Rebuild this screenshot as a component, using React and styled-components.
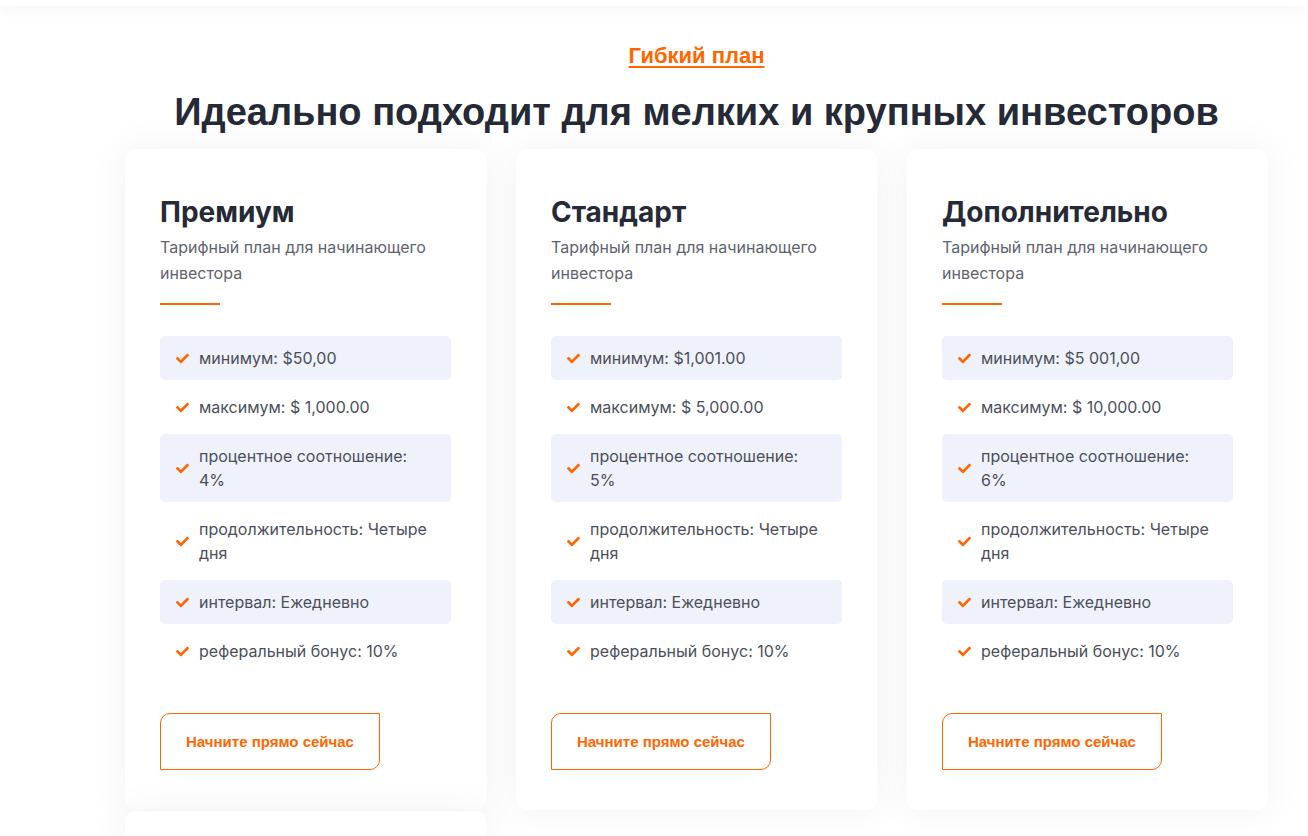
import React from "react";
import styled, { createGlobalStyle } from "styled-components";
import { FaCheck } from "react-icons/fa";

const Global = createGlobalStyle`
  * { box-sizing: border-box; }
  html, body { margin: 0; padding: 0; background: #fff; }
  body { font-family: "Inter", "Liberation Sans", sans-serif; overflow: hidden; height: 836px; }
`;

const Header = styled.header`
  height: 6px;
  background: #fff;
  box-shadow: 0 3px 14px rgba(0, 0, 0, 0.07);
  position: relative;
  z-index: 2;
`;

const Section = styled.section`
  padding: 36px 0 0 125px;
`;

const Container = styled.div`
  width: 1143px;
  display: flex;
  flex-direction: column;
  align-items: center;
`;

const Kicker = styled.a`
  font-family: "Liberation Sans", Arial, sans-serif;
  font-weight: 700;
  font-size: 22px;
  line-height: 28px;
  color: #ff6600;
  text-decoration: underline;
  text-decoration-thickness: 2px;
  text-underline-offset: 3px;
`;

const Heading = styled.h2`
  margin: 20px 0 15px;
  font-family: "Liberation Sans", Arial, sans-serif;
  font-weight: 700;
  font-size: 38px;
  line-height: 44px;
  color: #262a36;
`;

const Grid = styled.div`
  width: 100%;
  display: grid;
  grid-template-columns: repeat(3, 361px);
  column-gap: 30px;
  row-gap: 1px;
`;

const Card = styled.div`
  background: #fff;
  border-radius: 10px;
  box-shadow: 0 0 40px rgba(0, 0, 0, 0.055);
  padding: 46px 35px 40px;
  display: flex;
  flex-direction: column;
  align-items: flex-start;
`;

const PeekCard = styled(Card)`
  height: 60px;
  padding: 0;
`;

const Title = styled.h3`
  margin: 0 0 5px;
  font-weight: 700;
  font-size: 28px;
  line-height: 34px;
  color: #262a36;
`;

const Desc = styled.p`
  margin: 0;
  font-size: 16px;
  line-height: 26px;
  color: #5f636e;
  max-width: 280px;
`;

const Divider = styled.span`
  display: block;
  width: 60px;
  height: 2px;
  background: #ff6600;
  margin: 17px 0 31px;
`;

const List = styled.ul`
  list-style: none;
  margin: 0;
  padding: 0;
  width: 291px;
  display: flex;
  flex-direction: column;
  gap: 5px;
`;

const Item = styled.li`
  display: flex;
  align-items: center;
  gap: 10px;
  padding: 10px 16px;
  border-radius: 5px;
  background: ${(p) => (p.$shaded ? "#eff2fa" : "transparent")};
  font-size: 16px;
  line-height: 24px;
  color: #4b4f5b;
  svg { flex: none; color: #ff6600; width: 13px; height: 13px; }
`;

const Button = styled.a`
  margin-top: 40px;
  display: inline-block;
  padding: 19px 25px;
  border: 1px solid #ff6600;
  border-radius: 10px 0 10px 0;
  font-family: "Liberation Sans", Arial, sans-serif;
  font-weight: 700;
  font-size: 15px;
  line-height: 17px;
  color: #ff6600;
  text-decoration: none;
`;

const plans = [
  { name: "Премиум", min: "$50,00", max: "$ 1,000.00", pct: "4%" },
  { name: "Стандарт", min: "$1,001.00", max: "$ 5,000.00", pct: "5%" },
  { name: "Дополнительно", min: "$5 001,00", max: "$ 10,000.00", pct: "6%" },
];

function Plan({ p }) {
  const items = [
    `минимум: ${p.min}`,
    `максимум: ${p.max}`,
    `процентное соотношение: ${p.pct}`,
    "продолжительность: Четыре дня",
    "интервал: Ежедневно",
    "реферальный бонус: 10%",
  ];
  return (
    <Card>
      <Title>{p.name}</Title>
      <Desc>Тарифный план для начинающего инвестора</Desc>
      <Divider />
      <List>
        {items.map((t, i) => (
          <Item key={i} $shaded={i % 2 === 0}>
            <FaCheck />
            <span>{t}</span>
          </Item>
        ))}
      </List>
      <Button href="#">Начните прямо сейчас</Button>
    </Card>
  );
}

export default function App() {
  return (
    <>
      <Global />
      <Header />
      <Section>
        <Container>
          <Kicker href="#">Гибкий план</Kicker>
          <Heading>Идеально подходит для мелких и крупных инвесторов</Heading>
          <Grid>
            {plans.map((p, i) => (
              <Plan key={i} p={p} />
            ))}
            <PeekCard />
          </Grid>
        </Container>
      </Section>
    </>
  );
}
